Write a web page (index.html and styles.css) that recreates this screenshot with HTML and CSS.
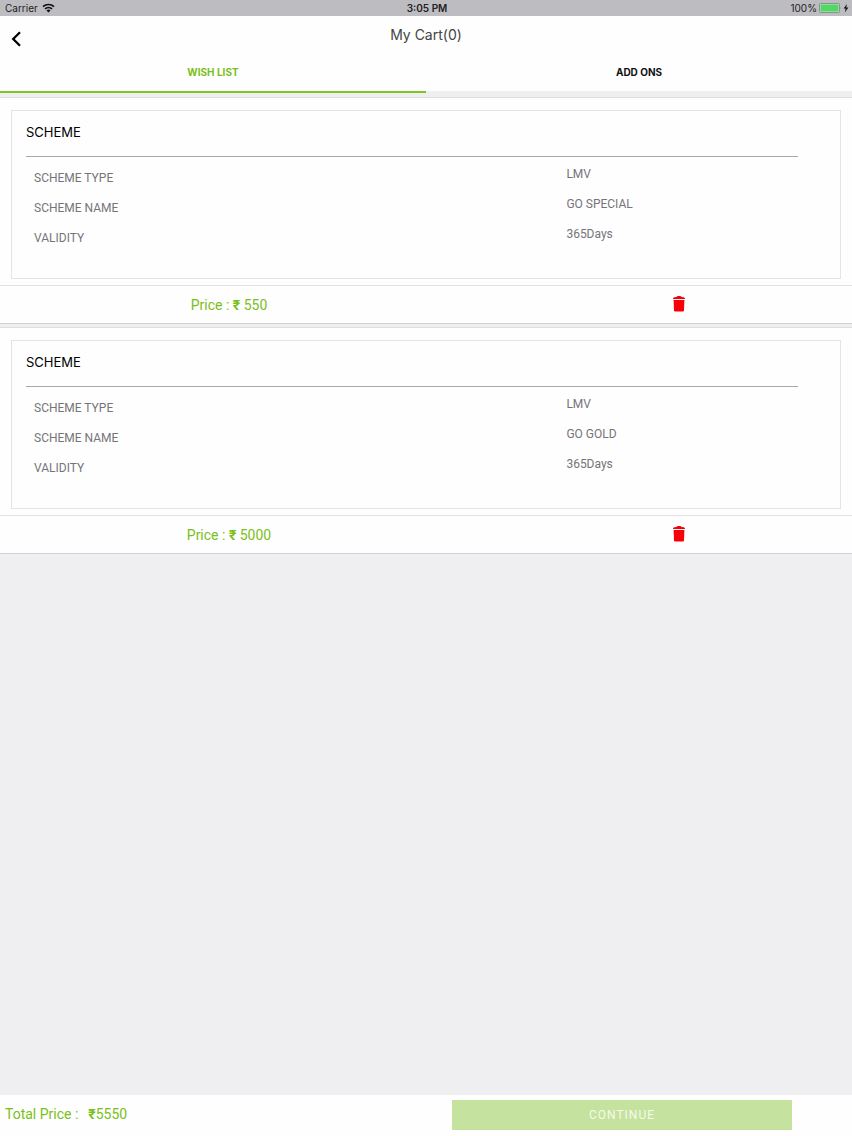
FILE: index.html
```html
<!DOCTYPE html>
<html lang="en">
<head>
  <meta charset="UTF-8" />
  <title>My Cart</title>
  <meta name="viewport" content="width=device-width, initial-scale=1.0">
  <link rel="stylesheet" href="styles.css">
</head>
<body>
  <div class="status-bar">
    <div class="carrier">
      <span>Carrier</span>
      <svg width="13" height="10" viewBox="0 0 13 10" fill="none" stroke="#111" stroke-width="1.7">
        <path d="M1 3.7a8 8 0 0 1 11 0M3 5.9a5.1 5.1 0 0 1 7 0" />
        <path d="M6.5 9.6L4.5 7.5a2.9 2.9 0 0 1 4 0z" fill="#111" stroke="none" />
      </svg>
    </div>
    <div class="clock">3:05 PM</div>
    <div class="battery">
      <span>100%</span>
      <svg width="30" height="10" viewBox="0 0 30 10">
        <rect x="0.5" y="0.5" width="20" height="9" rx="1" fill="#c9ccc9" stroke="#6b8f70" stroke-width="0.8" />
        <rect x="1.7" y="1.7" width="17.6" height="6.6" fill="#4cd964" />
        <path d="M21.5 3.7q1.1 1.3 0 2.6z" fill="#6b8f70" />
        <path d="M28 1L24.6 5.6h2.1l-0.9 3.8 3.6-4.9h-2.2z" fill="#111" />
      </svg>
    </div>
  </div>

  <header class="header">
    <button type="button" class="back" aria-label="Back">
      <svg width="12" height="16" viewBox="0 0 12 16" fill="none" stroke="#000" stroke-width="2.3">
        <path d="M9 1.2L2.2 8L9 14.8" />
      </svg>
    </button>
    <h1>My Cart(0)</h1>
  </header>

  <nav class="tabs">
    <button type="button" class="tab active">WISH LIST</button>
    <button type="button" class="tab">ADD ONS</button>
  </nav>

  <main class="cart">
    <section class="card">
      <div class="panel">
        <h2>SCHEME</h2>
        <dl class="details">
          <dt>SCHEME TYPE</dt>
          <dd>LMV</dd>
          <dt>SCHEME NAME</dt>
          <dd>GO SPECIAL</dd>
          <dt>VALIDITY</dt>
          <dd>365Days</dd>
        </dl>
      </div>
      <div class="card-footer">
        <div class="price">Price : <b>₹</b> 550</div>
        <div class="remove">
          <button type="button" aria-label="Remove GO SPECIAL">
            <svg width="12" height="16" viewBox="0 0 12 16" fill="#f80008">
              <path d="M0 3V2.4Q0.2 1.4 1.4 1.2L3.4 1Q4 0 5 0H7Q8 0 8.6 1L10.6 1.2Q11.8 1.4 12 2.4V3z" />
              <path d="M0.6 4h10.8l-0.4 10.2q-0.1 1.3-1.3 1.3H2.3q-1.2 0-1.3-1.3z" />
            </svg>
          </button>
        </div>
      </div>
    </section>

    <section class="card">
      <div class="panel">
        <h2>SCHEME</h2>
        <dl class="details">
          <dt>SCHEME TYPE</dt>
          <dd>LMV</dd>
          <dt>SCHEME NAME</dt>
          <dd>GO GOLD</dd>
          <dt>VALIDITY</dt>
          <dd>365Days</dd>
        </dl>
      </div>
      <div class="card-footer">
        <div class="price">Price : <b>₹</b> 5000</div>
        <div class="remove">
          <button type="button" aria-label="Remove GO GOLD">
            <svg width="12" height="16" viewBox="0 0 12 16" fill="#f80008">
              <path d="M0 3V2.4Q0.2 1.4 1.4 1.2L3.4 1Q4 0 5 0H7Q8 0 8.6 1L10.6 1.2Q11.8 1.4 12 2.4V3z" />
              <path d="M0.6 4h10.8l-0.4 10.2q-0.1 1.3-1.3 1.3H2.3q-1.2 0-1.3-1.3z" />
            </svg>
          </button>
        </div>
      </div>
    </section>
  </main>

  <footer class="checkout">
    <div class="total"><span>Total Price :</span> <span><b>₹</b>5550</span></div>
    <button type="button" class="continue">CONTINUE</button>
  </footer>
</body>
</html>
```

FILE: styles.css
```css
* {
  box-sizing: border-box;
}
body {
  margin: 0;
  min-height: 100vh;
  display: flex;
  flex-direction: column;
  font-family: Inter, "Liberation Sans", sans-serif;
  background-color: #efeef0;
  color: #000;
}
button {
  padding: 0;
  border: none;
  background: none;
  font-family: inherit;
  cursor: pointer;
}
svg {
  display: block;
}

/* Status bar */
.status-bar {
  display: grid;
  grid-template-columns: 1fr auto 1fr;
  align-items: center;
  height: 16px;
  padding: 0 3px 0 5px;
  background-color: #bdbcc1;
  font-size: 10px;
  color: #222;
}
.carrier,
.battery {
  display: flex;
  align-items: center;
  gap: 4px;
}
.battery {
  justify-content: flex-end;
  gap: 2px;
}
.clock {
  font-weight: 600;
}

/* Header */
.header {
  display: grid;
  grid-template-columns: 32px 1fr 32px;
  height: 38px;
  background-color: #fefefe;
}
.back {
  display: flex;
  align-items: center;
  padding: 8px 0 0 11px;
}
.header h1 {
  margin: 0;
  text-align: center;
  font-size: 14px;
  font-weight: 400;
  line-height: 38px;
  color: #444;
}

/* Tabs */
.tabs {
  display: flex;
  background-color: #fefefe;
}
.tab {
  flex: 1;
  height: 39px;
  padding-bottom: 2px;
  border-bottom: 2px solid #efeef0;
  font-size: 10px;
  font-weight: 700;
  color: #111;
}
.tab.active {
  color: #7abf18;
  border-bottom-color: #7fc41f;
}

/* Cart items */
.cart {
  flex: 1;
  display: flex;
  flex-direction: column;
  gap: 3px;
  padding-top: 4px;
}
.card {
  background-color: #fefefe;
  border-top: 1px solid #dedde0;
  border-bottom: 1px solid #d0cfd2;
}
.panel {
  height: 169px;
  margin: 12px 11px 6px;
  padding: 0 42px 0 14px;
  border: 1px solid #e6e3e8;
}
.panel h2 {
  margin: 0;
  padding-bottom: 3px;
  border-bottom: 1px solid #aaa8ad;
  font-size: 13px;
  font-weight: 400;
  line-height: 42px;
}
.details {
  display: grid;
  grid-template-columns: 7fr 3fr;
  grid-auto-rows: 30px;
  margin: 4px 0 0;
  font-family: Roboto, sans-serif;
  font-size: 12px;
  line-height: 26px;
  color: #76747a;
}
.details dt {
  align-self: end;
  padding-left: 8px;
}
.details dd {
  margin: 0;
}
.card-footer {
  display: grid;
  grid-template-columns: 1fr 1fr;
  align-items: center;
  height: 38px;
  border-top: 1px solid #e3e1e5;
}
.price,
.total {
  font-family: Roboto, sans-serif;
  font-size: 14px;
  color: #7abf18;
}
.price {
  padding-left: 32px;
  text-align: center;
}
.remove {
  display: flex;
  justify-content: center;
  padding: 0 0 2px 80px;
}

/* Checkout bar */
.checkout {
  display: flex;
  align-items: center;
  justify-content: space-between;
  height: 41px;
  padding: 0 7% 2px 5px;
  background-color: #fefefe;
}
.total {
  display: flex;
  gap: 10px;
  padding-bottom: 2px;
}
.continue {
  width: 40vw;
  height: 30px;
  background-color: #c6e29f;
  color: #f4fbe9;
  font-family: Roboto, sans-serif;
  font-size: 12px;
  letter-spacing: 1px;
}
```
